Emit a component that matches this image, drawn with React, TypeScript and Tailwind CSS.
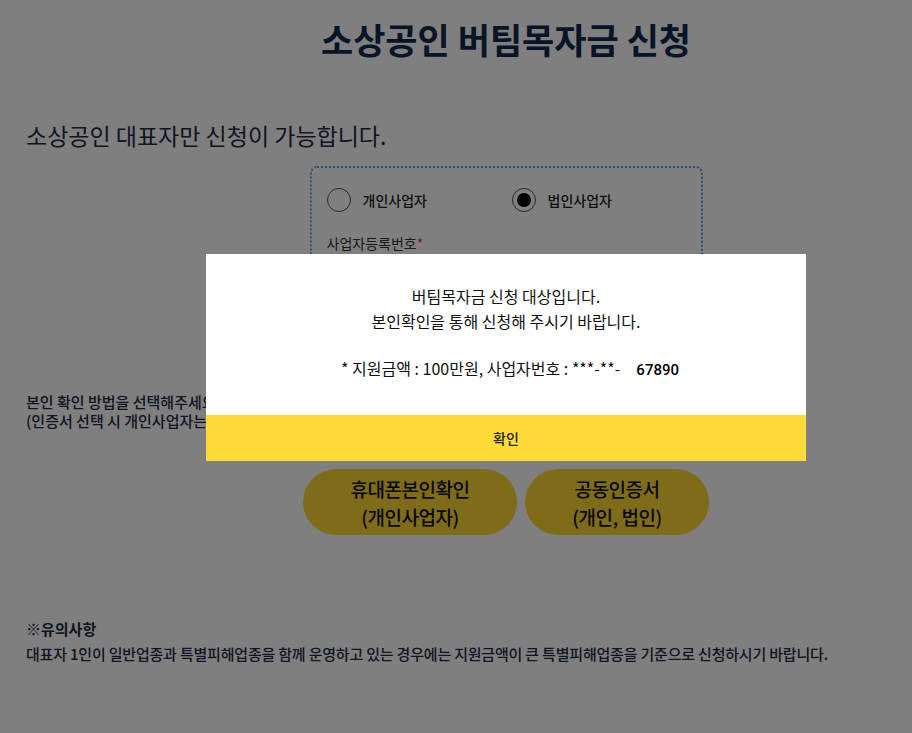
import React from "react";

function Radio({ checked, label }: { checked?: boolean; label: string }) {
  return (
    <label className="flex items-center gap-3">
      <span className="flex h-[24px] w-[24px] items-center justify-center rounded-full border border-[#555]">
        {checked && <span className="h-[14px] w-[14px] rounded-full bg-black" />}
      </span>
      <span className="text-[14px] font-medium text-[#222]">{label}</span>
    </label>
  );
}

export default function App() {
  return (
    <div className="relative h-[733px] w-[912px] overflow-hidden bg-white font-['Noto_Sans_CJK_KR',sans-serif] text-[#1b2a4a]">
      <div className="w-[986px] pl-[26px]">
        <h1 className="mt-[16px] text-center text-[35px] font-bold leading-[46px] text-[#14284f]">
          소상공인 버팀목자금 신청
        </h1>

        <p className="mt-[57px] text-[23px] leading-[32px] text-[#1e2b45]">
          소상공인 대표자만 신청이 가능합니다.
        </p>

        <div className="mx-auto mt-[15px] h-[212px] w-[393px] rounded-[7px] border-2 border-dotted border-[#5a9fe8] px-[15px] pt-[20px]">
          <div className="flex">
            <div className="w-[185px]">
              <Radio label="개인사업자" />
            </div>
            <Radio checked label="법인사업자" />
          </div>
          <p className="mt-[19px] text-[14px] leading-[24px] text-[#333]">
            사업자등록번호<span className="text-[#e03a3a]">*</span>
          </p>
          <div className="mt-[6px] h-[40px] rounded border border-[#ccc]" />
          <div className="mt-[8px] h-[40px] rounded border border-[#ccc]" />
        </div>

        <div className="mt-[14px] text-[15px] font-medium leading-[19px] text-[#1e2b45]">
          <p>본인 확인 방법을 선택해주세요.</p>
          <p>(인증서 선택 시 개인사업자는 공동인증서, 법인사업자는 법인인증서로 확인합니다.)</p>
        </div>

        <div className="mt-[39px] flex justify-center gap-[8px]">
          <button className="h-[66px] w-[214px] rounded-full bg-[#ffd936] pt-[1px] text-[19px] font-medium leading-[28px] tracking-[-0.5px] text-[#111]">
            휴대폰본인확인
            <br />
            (개인사업자)
          </button>
          <button className="h-[66px] w-[184px] rounded-full bg-[#ffd936] pt-[1px] text-[19px] font-medium leading-[28px] tracking-[-0.5px] text-[#111]">
            공동인증서
            <br />
            (개인, 법인)
          </button>
        </div>

        <div className="mt-[81px] text-[15px] leading-[25px] text-[#1e2b45]">
          <p className="font-bold">※유의사항</p>
          <p className="font-medium tracking-[-0.2px]">
            대표자 1인이 일반업종과 특별피해업종을 함께 운영하고 있는 경우에는 지원금액이 큰 특별피해업종을 기준으로 신청하시기 바랍니다.
          </p>
        </div>
      </div>

      <div className="absolute inset-0 bg-black/50" />

      <div className="absolute left-[206px] top-[254px] w-[600px] bg-white">
        <div className="pb-[32px] pt-[30px] text-center text-[16px] leading-[25px] text-[#111]">
          <p>버팀목자금 신청 대상입니다.</p>
          <p>본인확인을 통해 신청해 주시기 바랍니다.</p>
          <p className="mt-[22px] pl-[8px]">
            * 지원금액 : 100만원, 사업자번호 : ***-**-
            <span className="ml-[16px] font-['Roboto',sans-serif] text-[15px] font-medium text-black">67890</span>
          </p>
        </div>
        <button className="block h-[46px] w-full bg-[#ffdb3a] text-[14px] font-medium text-[#222]">확인</button>
      </div>
    </div>
  );
}
